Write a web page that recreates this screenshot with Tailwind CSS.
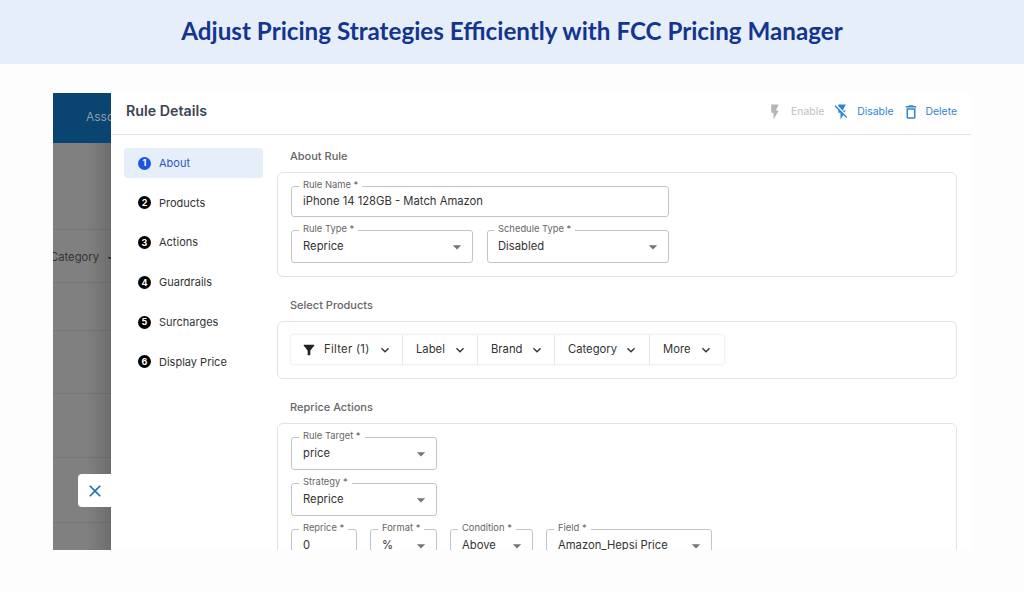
<!DOCTYPE html>
<html lang="en">
<head>
    <meta charset="UTF-8">
    <meta name="viewport" content="width=device-width, initial-scale=1.0">
    <title>FCC Pricing Manager</title>
    <script src="https://cdn.jsdelivr.net/npm/@tailwindcss/browser@4"></script>
</head>
<body class="bg-[#fdfdfd] text-[#2b2b2b] font-[Inter] w-[1024px] h-[592px] overflow-hidden">

    <!-- Banner -->
    <header class="h-[64px] bg-[#e6eefa] flex items-center justify-center pb-[2px]">
        <h1 class="font-[Lato] font-bold text-[24.2px] text-[#14358f]">Adjust Pricing Strategies Efficiently with FCC Pricing Manager</h1>
    </header>

    <!-- App window -->
    <div class="ml-[53px] mt-[29px] w-[918px] h-[457px] flex overflow-hidden">

        <!-- Page behind the drawer -->
        <div class="relative w-[58px] shrink-0 bg-[#808080] flex flex-col overflow-hidden text-[11.25px] text-[#333]">
            <div class="h-[50px] shrink-0 bg-[#0a4470] text-[#8a9bab] text-[12px] pl-[33px] pt-[15px] whitespace-nowrap">Associated</div>
            <div class="h-[87px] shrink-0 border-b border-[#767676]"></div>
            <div class="h-[53px] shrink-0 border-b border-[#767676] flex items-center gap-[5px] -ml-[3px] pt-[3px] whitespace-nowrap">
                <span>Category</span>
                <svg class="w-3 h-3 shrink-0" viewBox="0 0 24 24" fill="#333"><path d="M7 10l5 5 5-5z"/></svg>
            </div>
            <div class="h-[48px] shrink-0 border-b border-[#767676]"></div>
            <div class="h-[63px] shrink-0 border-b border-[#767676]"></div>
            <div class="h-[64px] shrink-0 border-b border-[#767676]"></div>
            <div class="h-[65px] shrink-0 border-b border-[#767676]"></div>
            <div class="absolute top-[50px] bottom-0 right-0 w-[24px] bg-gradient-to-r from-black/0 to-black/15"></div>
            <button class="absolute left-[25px] top-[381px] w-[33px] h-[33px] bg-white rounded-l-[4px] flex items-center justify-center">
                <svg class="w-[20px] h-[20px]" viewBox="0 0 24 24" fill="#1f6fb5"><path d="M19 6.41L17.59 5 12 10.59 6.41 5 5 6.41 10.59 12 5 17.59 6.41 19 12 13.41 17.59 19 19 17.59 13.41 12z"/></svg>
            </button>
        </div>

        <!-- Drawer -->
        <div class="flex-1 bg-white flex flex-col min-w-0">
            <div class="h-[42px] shrink-0 border-b border-[#e3e3e3] flex items-center justify-between pl-[15px] pr-[14px] pb-[5px]">
                <h2 class="text-[14.25px] font-semibold text-[#3c4450]">Rule Details</h2>
                <div class="flex items-center text-[10.4px] text-[#2f86d0] mt-[2px]">
                    <svg class="w-[18px] h-[18px]" viewBox="0 0 24 24" fill="#b5b5b5"><path d="M7 2v11h3v9l7-12h-4l4-8z"/></svg>
                    <span class="ml-[7px] text-[#c0c0c0]">Enable</span>
                    <svg class="w-[18px] h-[18px] ml-[9px]" viewBox="0 0 24 24" fill="#2f86d0"><path d="M3.27 3L2 4.27l5 5V13h3v9l3.58-6.14L17.73 20 19 18.73 3.27 3zM17 10h-4l4-8H7v2.18l8.46 8.46L17 10z"/></svg>
                    <span class="ml-[6px]">Disable</span>
                    <svg class="w-[18px] h-[18px] ml-[8px]" viewBox="0 0 24 24" fill="#2f86d0"><path d="M16 9v10H8V9h8m-1.5-6h-5l-1 1H5v2h14V4h-3.5l-1-1zM18 7H6v12c0 1.1.9 2 2 2h8c1.1 0 2-.9 2-2V7z"/></svg>
                    <span class="ml-[6px]">Delete</span>
                </div>
            </div>

            <div class="flex-1 flex min-h-0">
                <!-- Steps -->
                <nav class="w-[166px] shrink-0 pl-[13px] pt-[13px] flex flex-col gap-[9.8px] text-[11px] text-[#333]">
                    <a class="w-[139px] h-[30px] rounded-[4px] bg-[#e6eefa] flex items-center gap-[8px] pl-[14px] text-[#2f55c4]">
                        <span class="w-[13px] h-[13px] rounded-full bg-[#1a56e0] text-white text-[9px] font-bold flex items-center justify-center">1</span>About
                    </a>
                    <a class="w-[139px] h-[30px] flex items-center gap-[8px] pl-[14px]">
                        <span class="w-[13px] h-[13px] rounded-full bg-black text-white text-[9px] font-bold flex items-center justify-center">2</span>Products
                    </a>
                    <a class="w-[139px] h-[30px] flex items-center gap-[8px] pl-[14px]">
                        <span class="w-[13px] h-[13px] rounded-full bg-black text-white text-[9px] font-bold flex items-center justify-center">3</span>Actions
                    </a>
                    <a class="w-[139px] h-[30px] flex items-center gap-[8px] pl-[14px]">
                        <span class="w-[13px] h-[13px] rounded-full bg-black text-white text-[9px] font-bold flex items-center justify-center">4</span>Guardrails
                    </a>
                    <a class="w-[139px] h-[30px] flex items-center gap-[8px] pl-[14px]">
                        <span class="w-[13px] h-[13px] rounded-full bg-black text-white text-[9px] font-bold flex items-center justify-center">5</span>Surcharges
                    </a>
                    <a class="w-[139px] h-[30px] flex items-center gap-[8px] pl-[14px]">
                        <span class="w-[13px] h-[13px] rounded-full bg-black text-white text-[9px] font-bold flex items-center justify-center">6</span>Display Price
                    </a>
                </nav>

                <!-- Form -->
                <div class="w-[680px] shrink-0 overflow-hidden text-[11.25px] text-[#333]">
                    <h3 class="h-[37px] pl-[13px] pt-[13px] text-[11px] font-medium text-[#666]">About Rule</h3>
                    <section class="border border-[#e3e3e3] rounded-[6px] p-[13px] flex flex-col gap-[13px]">
                        <div class="relative w-[378px] h-[31px] border border-[#c4c4c4] rounded-[3px] flex items-center pl-[11px]">
                            <label class="absolute -top-[8px] left-[7px] bg-white px-[4px] text-[9.4px] leading-[12px] text-[#666]">Rule Name *</label>
                            iPhone 14 128GB - Match Amazon
                        </div>
                        <div class="flex gap-[14px]">
                            <div class="relative w-[182px] h-[33px] border border-[#c4c4c4] rounded-[3px] flex items-center justify-between pl-[11px] pr-[5px]">
                                <label class="absolute -top-[8px] left-[7px] bg-white px-[4px] text-[9.4px] leading-[12px] text-[#666]">Rule Type *</label>
                                Reprice
                                <svg class="w-[20px] h-[20px]" viewBox="0 0 24 24" fill="#757575"><path d="M7 10l5 5 5-5z"/></svg>
                            </div>
                            <div class="relative w-[182px] h-[33px] border border-[#c4c4c4] rounded-[3px] flex items-center justify-between pl-[10px] pr-[5px]">
                                <label class="absolute -top-[8px] left-[6px] bg-white px-[4px] text-[9.4px] leading-[12px] text-[#666]">Schedule Type *</label>
                                Disabled
                                <svg class="w-[20px] h-[20px]" viewBox="0 0 24 24" fill="#757575"><path d="M7 10l5 5 5-5z"/></svg>
                            </div>
                        </div>
                    </section>

                    <h3 class="h-[44px] pl-[13px] pt-[20px] text-[11px] font-medium text-[#666]">Select Products</h3>
                    <section class="border border-[#e3e3e3] rounded-[6px] h-[58px] pl-[13px] pt-[13px]">
                        <div class="inline-flex h-[29px] rounded-[3px] shadow-[0_0_3px_rgba(0,0,0,0.16)] divide-x divide-[#e6e6e6]">
                            <div class="w-[112px] flex items-center pl-[10px]">
                                <svg class="w-[16px] h-[16px]" viewBox="0 0 24 24" fill="#222"><path d="M4.25 5.61C6.27 8.2 10 13 10 13v6c0 .55.45 1 1 1h2c.55 0 1-.45 1-1v-6s3.72-4.8 5.74-7.39c.51-.66.04-1.61-.79-1.61H5.04c-.83 0-1.3.95-.79 1.61z"/></svg>
                                <span class="ml-[7px] tracking-[0.3px]">Filter (1)</span>
                                <svg class="w-[16px] h-[16px] ml-[7px]" viewBox="0 0 24 24" fill="#333"><path d="M7.41 8.59 12 13.17l4.59-4.58L18 10l-6 6-6-6 1.41-1.41z"/></svg>
                            </div>
                            <div class="w-[75px] flex items-center pl-[13px]">
                                Label
                                <svg class="w-[16px] h-[16px] ml-[7px]" viewBox="0 0 24 24" fill="#333"><path d="M7.41 8.59 12 13.17l4.59-4.58L18 10l-6 6-6-6 1.41-1.41z"/></svg>
                            </div>
                            <div class="w-[77px] flex items-center pl-[13px]">
                                Brand
                                <svg class="w-[16px] h-[16px] ml-[7px]" viewBox="0 0 24 24" fill="#333"><path d="M7.41 8.59 12 13.17l4.59-4.58L18 10l-6 6-6-6 1.41-1.41z"/></svg>
                            </div>
                            <div class="w-[95px] flex items-center pl-[13px]">
                                Category
                                <svg class="w-[16px] h-[16px] ml-[6px]" viewBox="0 0 24 24" fill="#333"><path d="M7.41 8.59 12 13.17l4.59-4.58L18 10l-6 6-6-6 1.41-1.41z"/></svg>
                            </div>
                            <div class="w-[74px] flex items-center pl-[13px]">
                                More
                                <svg class="w-[16px] h-[16px] ml-[7px]" viewBox="0 0 24 24" fill="#333"><path d="M7.41 8.59 12 13.17l4.59-4.58L18 10l-6 6-6-6 1.41-1.41z"/></svg>
                            </div>
                        </div>
                    </section>

                    <h3 class="h-[44px] pl-[13px] pt-[20px] text-[11px] font-medium text-[#666]">Reprice Actions</h3>
                    <section class="border border-[#e3e3e3] rounded-[6px] p-[13px] flex flex-col gap-[13px]">
                        <div class="relative w-[146px] h-[33px] border border-[#c4c4c4] rounded-[3px] flex items-center justify-between pl-[11px] pr-[5px]">
                            <label class="absolute -top-[8px] left-[7px] bg-white px-[4px] text-[9.4px] leading-[12px] text-[#666]">Rule Target *</label>
                            price
                            <svg class="w-[20px] h-[20px]" viewBox="0 0 24 24" fill="#757575"><path d="M7 10l5 5 5-5z"/></svg>
                        </div>
                        <div class="relative w-[146px] h-[33px] border border-[#c4c4c4] rounded-[3px] flex items-center justify-between pl-[11px] pr-[5px]">
                            <label class="absolute -top-[8px] left-[7px] bg-white px-[4px] text-[9.4px] leading-[12px] text-[#666]">Strategy *</label>
                            Reprice
                            <svg class="w-[20px] h-[20px]" viewBox="0 0 24 24" fill="#757575"><path d="M7 10l5 5 5-5z"/></svg>
                        </div>
                        <div class="flex gap-[13px]">
                            <div class="relative w-[66px] h-[33px] border border-[#c4c4c4] rounded-[3px] flex items-center pl-[11px]">
                                <label class="absolute -top-[8px] left-[7px] bg-white px-[4px] text-[9.4px] leading-[12px] text-[#666]">Reprice *</label>
                                0
                            </div>
                            <div class="relative w-[67px] h-[33px] border border-[#c4c4c4] rounded-[3px] flex items-center justify-between pl-[11px] pr-[5px]">
                                <label class="absolute -top-[8px] left-[7px] bg-white px-[4px] text-[9.4px] leading-[12px] text-[#666]">Format *</label>
                                %
                                <svg class="w-[20px] h-[20px]" viewBox="0 0 24 24" fill="#757575"><path d="M7 10l5 5 5-5z"/></svg>
                            </div>
                            <div class="relative w-[83px] h-[33px] border border-[#c4c4c4] rounded-[3px] flex items-center justify-between pl-[11px] pr-[5px]">
                                <label class="absolute -top-[8px] left-[7px] bg-white px-[4px] text-[9.4px] leading-[12px] text-[#666]">Condition *</label>
                                Above
                                <svg class="w-[20px] h-[20px]" viewBox="0 0 24 24" fill="#757575"><path d="M7 10l5 5 5-5z"/></svg>
                            </div>
                            <div class="relative w-[166px] h-[33px] border border-[#c4c4c4] rounded-[3px] flex items-center justify-between pl-[11px] pr-[5px]">
                                <label class="absolute -top-[8px] left-[7px] bg-white px-[4px] text-[9.4px] leading-[12px] text-[#666]">Field *</label>
                                Amazon_Hepsi Price
                                <svg class="w-[20px] h-[20px]" viewBox="0 0 24 24" fill="#757575"><path d="M7 10l5 5 5-5z"/></svg>
                            </div>
                        </div>
                    </section>
                </div>
            </div>
        </div>
    </div>

</body>
</html>
